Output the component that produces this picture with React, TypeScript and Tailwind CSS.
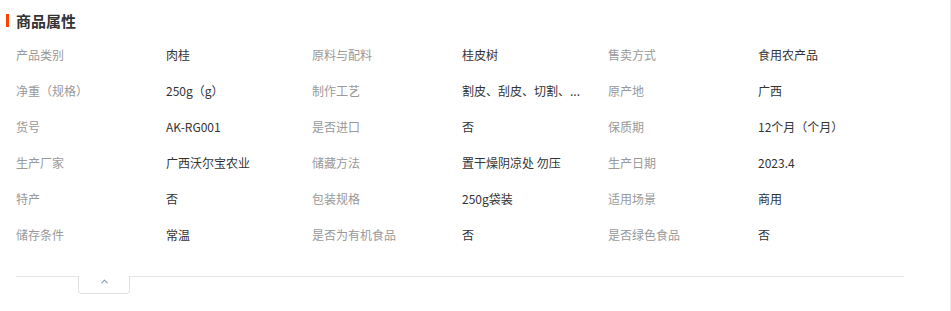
import { ChevronUp } from "lucide-react";

type Attr = { label: string; value: string };

// long values arrive already shortened with "..."
const attrs: Attr[] = [
  { label: "产品类别", value: "肉桂" },
  { label: "原料与配料", value: "桂皮树" },
  { label: "售卖方式", value: "食用农产品" },
  { label: "净重（规格）", value: "250g（g）" },
  { label: "制作工艺", value: "割皮、刮皮、切割、..." },
  { label: "原产地", value: "广西" },
  { label: "货号", value: "AK-RG001" },
  { label: "是否进口", value: "否" },
  { label: "保质期", value: "12个月（个月）" },
  { label: "生产厂家", value: "广西沃尔宝农业" },
  { label: "储藏方法", value: "置干燥阴凉处 勿压" },
  { label: "生产日期", value: "2023.4" },
  { label: "特产", value: "否" },
  { label: "包装规格", value: "250g袋装" },
  { label: "适用场景", value: "商用" },
  { label: "储存条件", value: "常温" },
  { label: "是否为有机食品", value: "否" },
  { label: "是否绿色食品", value: "否" },
];

export default function App() {
  return (
    <main
      className="h-[311px] w-[951px] border-r border-[#ececec] bg-white text-[12px]"
      style={{ fontFamily: '"Noto Sans CJK SC", "Liberation Sans", sans-serif' }}
    >
      <h2 className="flex h-[37px] items-center gap-[7px] pl-[6px] pt-[3px] text-[15px] font-bold leading-none text-[#333]">
        <span className="h-[13px] w-[3px] bg-[#ff4400]" />
        商品属性
      </h2>

      <div className="ml-[16px] grid w-[888px] grid-cols-[150px_146px_150px_146px_150px_146px]">
        {attrs.map((a) => (
          <div key={a.label} className="contents">
            <div className="flex h-[36px] items-center whitespace-nowrap text-[#999]">{a.label}</div>
            <div className="flex h-[36px] items-center whitespace-nowrap text-[#333]">{a.value}</div>
          </div>
        ))}
      </div>

      <div className="ml-[16px] mt-[23px] w-[888px] border-t border-[#e5e5e5]">
        <button className="-mt-px ml-[62px] flex h-[18px] w-[52px] items-center justify-center rounded-b-[4px] border border-t-0 border-[#e0e0e0] bg-white pb-[6px] text-[#8a9bb0]">
          <ChevronUp size={11} strokeWidth={2.2} />
        </button>
      </div>
    </main>
  );
}
